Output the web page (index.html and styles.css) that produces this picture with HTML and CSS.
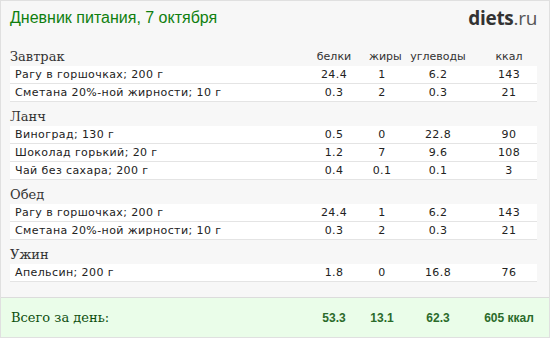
FILE: index.html
```html
<!DOCTYPE html>
<html lang="ru">
<head>
<meta charset="utf-8">
<link rel="stylesheet" href="styles.css">
</head>
<body>
<div class="page">
  <div class="header">
    <div class="title">Дневник питания, 7 октября</div>
    <div class="logo"><b>diets</b>.ru</div>
  </div>
  <div class="sections">
    <div class="section">
      <div class="meal grid">
        <span class="meal-name">Завтрак</span>
        <span class="colh">белки</span>
        <span class="colh">жиры</span>
        <span class="colh">углеводы</span>
        <span class="colh">ккал</span>
      </div>
      <div class="row grid"><span class="name">Рагу в горшочках; 200 г</span><span>24.4</span><span>1</span><span>6.2</span><span>143</span></div>
      <div class="row grid"><span class="name">Сметана 20%-ной жирности; 10 г</span><span>0.3</span><span>2</span><span>0.3</span><span>21</span></div>
    </div>
    <div class="section">
      <div class="meal"><span class="meal-name">Ланч</span></div>
      <div class="row grid"><span class="name">Виноград; 130 г</span><span>0.5</span><span>0</span><span>22.8</span><span>90</span></div>
      <div class="row grid"><span class="name">Шоколад горький; 20 г</span><span>1.2</span><span>7</span><span>9.6</span><span>108</span></div>
      <div class="row grid"><span class="name">Чай без сахара; 200 г</span><span>0.4</span><span>0.1</span><span>0.1</span><span>3</span></div>
    </div>
    <div class="section">
      <div class="meal"><span class="meal-name">Обед</span></div>
      <div class="row grid"><span class="name">Рагу в горшочках; 200 г</span><span>24.4</span><span>1</span><span>6.2</span><span>143</span></div>
      <div class="row grid"><span class="name">Сметана 20%-ной жирности; 10 г</span><span>0.3</span><span>2</span><span>0.3</span><span>21</span></div>
    </div>
    <div class="section">
      <div class="meal"><span class="meal-name">Ужин</span></div>
      <div class="row grid"><span class="name">Апельсин; 200 г</span><span>1.8</span><span>0</span><span>16.8</span><span>76</span></div>
    </div>
  </div>
  <div class="total">
    <div class="grid total-grid">
      <span class="total-label">Всего за день:</span>
      <span>53.3</span><span>13.1</span><span>62.3</span><span>605 ккал</span>
    </div>
  </div>
</div>
</body>
</html>
```

FILE: styles.css
```css
* { box-sizing: border-box; }
html, body { margin: 0; padding: 0; }
body { width: 550px; height: 338px; overflow: hidden; }
.page {
  width: 550px;
  height: 338px;
  border: 1px solid #e0e0e0;
  background: #f7f7f7;
  display: flex;
  flex-direction: column;
}
.header {
  display: flex;
  justify-content: space-between;
  align-items: flex-start;
  padding: 6px 12px 0 9px;
  height: 45px;
}
.title {
  font-family: "Liberation Sans", Arial, sans-serif;
  font-size: 16px;
  line-height: 22px;
  color: #0f7f0f;
}
.logo {
  font-family: "Open Sans", sans-serif;
  font-size: 19px;
  line-height: 22px;
  color: #555;
  letter-spacing: -0.3px;
}
.logo b { color: #333; font-weight: 700; }
.sections { flex: 1; padding: 0 12px 0 9px; }
.grid {
  display: grid;
  grid-template-columns: 1fr 70px 26px 86px 56px;
  align-items: center;
}
.grid > span { text-align: center; white-space: nowrap; }
.grid > span:first-child { text-align: left; }
.meal { height: 20px; display: grid; align-items: center; margin-top: 4px; }
.section:first-child .meal { margin-top: 0; }
.meal-name {
  font-family: "DejaVu Serif", serif;
  font-size: 13px;
  color: #333;
}
.colh {
  font-family: "DejaVu Sans", sans-serif;
  font-size: 11px;
  color: #333;
}
.row {
  height: 18px;
  background: #fff;
  border-bottom: 1px solid #e4e4e4;
  font-family: "DejaVu Sans", sans-serif;
  font-size: 11px;
  letter-spacing: 0.4px;
  color: #222;
}
.row .name { padding-left: 5px; }
.total {
  height: 40px;
  border-top: 1px solid #dcdcdc;
  background: #eafde9;
  padding: 0 12px 0 9px;
  display: flex;
  align-items: center;
}
.total-grid { width: 100%; }
.total-grid > span {
  font-family: "Liberation Sans", Arial, sans-serif;
  font-weight: 700;
  font-size: 12px;
  color: #2b6b2b;
}
.total-grid > span.total-label {
  font-family: "DejaVu Serif", serif;
  font-weight: 400;
  font-size: 13px;
  color: #0e4f0e;
  padding-left: 1px;
}
```
